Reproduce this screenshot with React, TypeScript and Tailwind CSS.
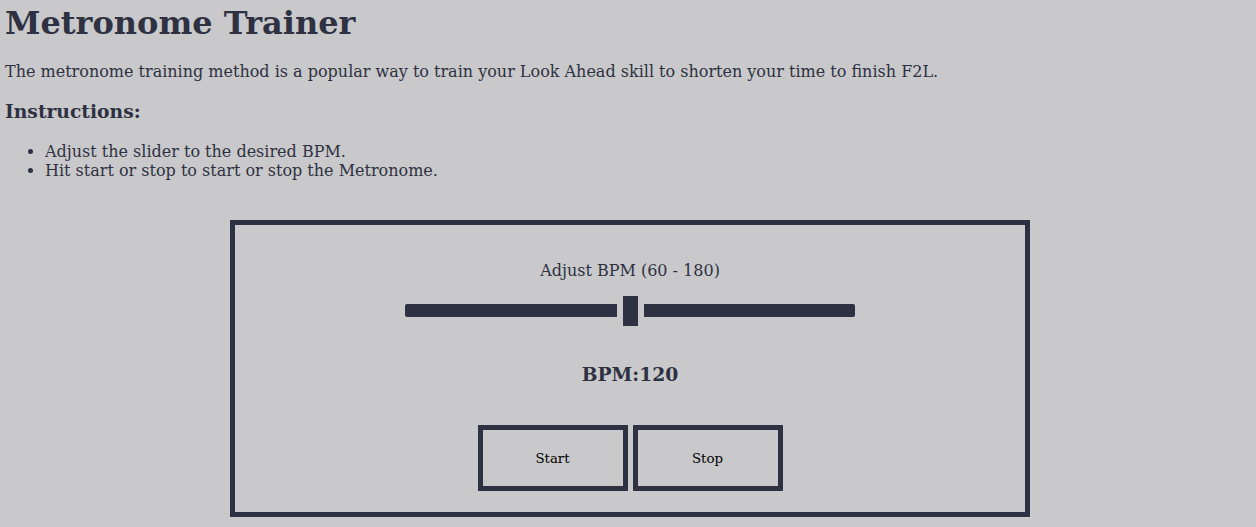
import { useState } from "react";

const serif = "font-['DejaVu_Serif','Liberation_Serif',serif]";

export default function App() {
  const [bpm] = useState(120);
  const pct = (bpm - 60) / 120;
  const trackWidth = 450;
  const thumb = 15;
  const thumbLeft = pct * (trackWidth - thumb);

  return (
    <div className={`min-h-screen bg-[#c9c9cb] p-[5px] text-[#2e3142] ${serif}`}>
      <h1 className="mb-[21px] text-[32px] font-bold leading-[37px]">Metronome Trainer</h1>
      <p className="text-[16px] leading-[18.6px]">
        The metronome training method is a popular way to train your Look Ahead skill to shorten your time to
        finish F2L.
      </p>
      <h3 className="mt-[19px] text-[18.72px] font-bold leading-[21.8px]">Instructions:</h3>
      <ul className="mt-[20.7px] list-disc pl-[40px] text-[16px] leading-[18.6px]">
        <li>Adjust the slider to the desired BPM.</li>
        <li>Hit start or stop to start or stop the Metronome.</li>
      </ul>

      <div className="ml-[225px] mt-[40px] flex w-[800px] flex-col items-center border-[5px] border-[#2e3142] pb-[21px] pt-[37px]">
        <p className="text-[16px] leading-[18.6px]">Adjust BPM (60 - 180)</p>

        <div className="relative mt-[15px] flex h-[30px] w-[450px] items-center">
          <div className="h-[13px] w-full rounded-[2px] bg-[#2e3142]" />
          <div
            className="absolute top-0 h-[30px] w-[15px] bg-[#2e3142] shadow-[0_0_0_6px_#c9c9cb]"
            style={{ left: thumbLeft }}
          />
        </div>

        <p className="mt-[38px] text-[18.72px] font-bold leading-[21.8px]">BPM:{bpm}</p>

        <div className="mt-[39px] flex gap-[5px]">
          <button className="h-[66px] w-[150px] border-[5px] border-[#2e3142] pt-[2px] text-[13.33px] text-black">
            Start
          </button>
          <button className="h-[66px] w-[150px] border-[5px] border-[#2e3142] pt-[2px] text-[13.33px] text-black">
            Stop
          </button>
        </div>
      </div>
    </div>
  );
}
